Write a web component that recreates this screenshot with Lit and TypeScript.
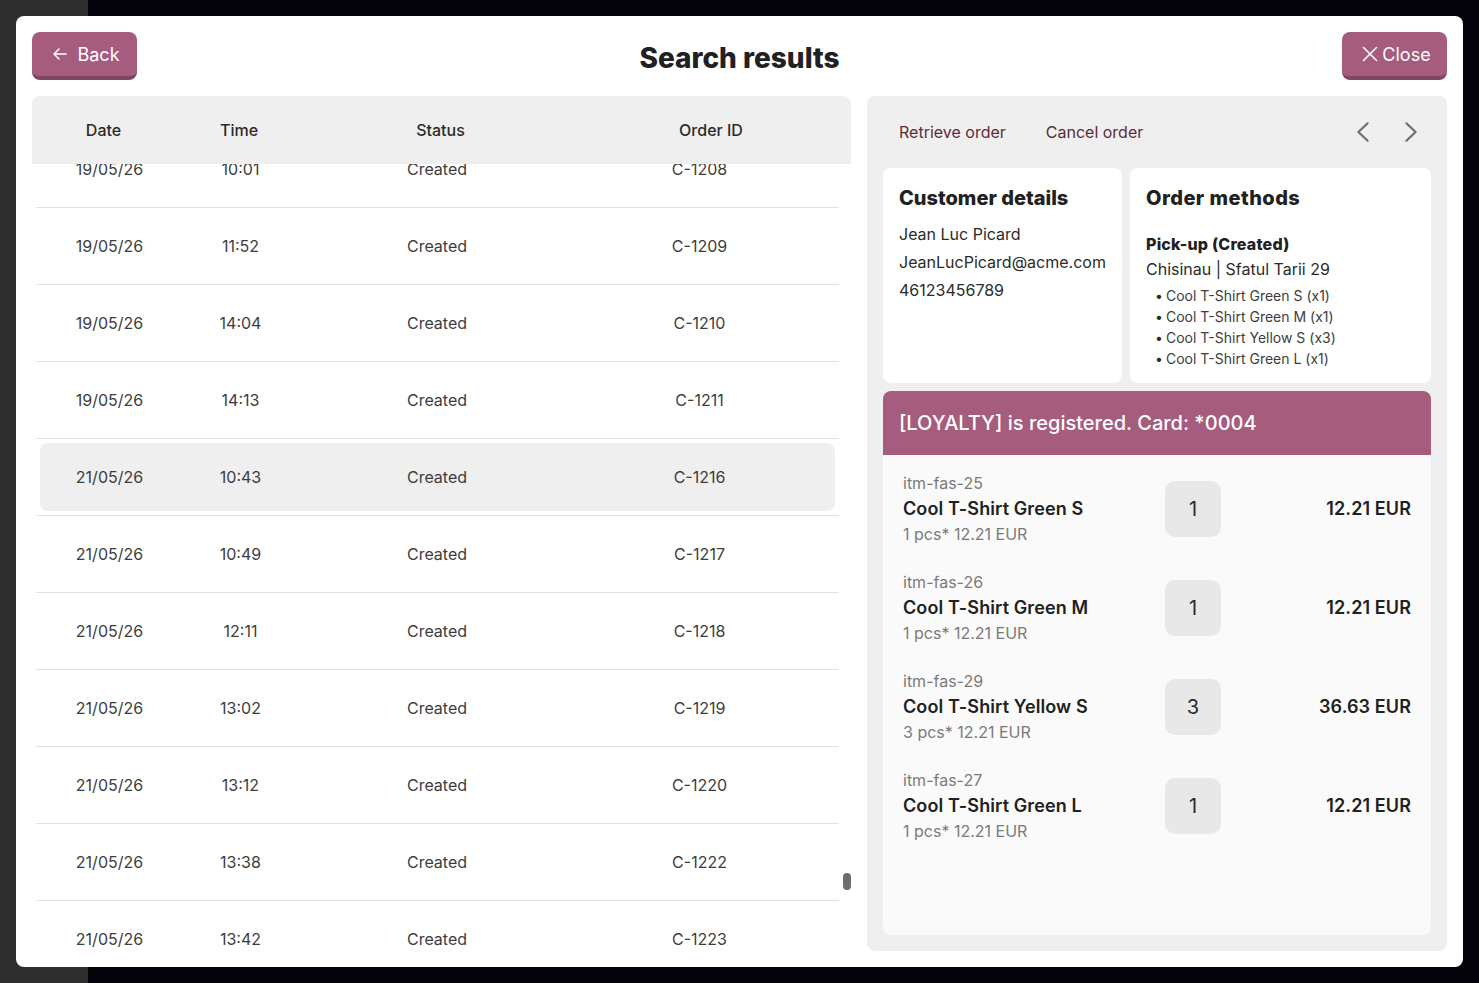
import { css, html, LitElement } from "lit";
import { customElement } from "lit/decorators.js";

const orders = [
  ["19/05/26", "10:01", "C-1208"],
  ["19/05/26", "11:52", "C-1209"],
  ["19/05/26", "14:04", "C-1210"],
  ["19/05/26", "14:13", "C-1211"],
  ["21/05/26", "10:43", "C-1216"],
  ["21/05/26", "10:49", "C-1217"],
  ["21/05/26", "12:11", "C-1218"],
  ["21/05/26", "13:02", "C-1219"],
  ["21/05/26", "13:12", "C-1220"],
  ["21/05/26", "13:38", "C-1222"],
  ["21/05/26", "13:42", "C-1223"],
];

const items = [
  { sku: "itm-fas-25", name: "Cool T-Shirt Green S", qty: 1, unit: "1 pcs* 12.21 EUR", total: "12.21 EUR" },
  { sku: "itm-fas-26", name: "Cool T-Shirt Green M", qty: 1, unit: "1 pcs* 12.21 EUR", total: "12.21 EUR" },
  { sku: "itm-fas-29", name: "Cool T-Shirt Yellow S", qty: 3, unit: "3 pcs* 12.21 EUR", total: "36.63 EUR" },
  { sku: "itm-fas-27", name: "Cool T-Shirt Green L", qty: 1, unit: "1 pcs* 12.21 EUR", total: "12.21 EUR" },
];

@customElement("app-root")
export class AppRoot extends LitElement {
  static override styles = css`
    :host {
      display: block;
      width: 1479px;
      height: 983px;
      overflow: hidden;
      font-family: "Inter", "Liberation Sans", sans-serif;
      color: #2b2b2b;
    }
    .backdrop {
      box-sizing: border-box;
      height: 983px;
      padding: 16px;
      background: linear-gradient(90deg, #2d2d2d 88px, #04030a 88px);
    }
    .modal {
      box-sizing: border-box;
      height: 951px;
      display: flex;
      flex-direction: column;
      gap: 16px;
      padding: 16px 16px 0;
      background: #fff;
      border-radius: 8px;
    }
    .head {
      display: flex;
      align-items: center;
      justify-content: space-between;
      height: 48px;
      flex: none;
    }
    .title {
      margin: 3px 0 0;
      font-family: "Inter", sans-serif;
      font-weight: 800;
      font-size: 28px;
      color: #212121;
    }
    .btn {
      box-sizing: border-box;
      width: 105px;
      height: 48px;
      display: flex;
      align-items: center;
      justify-content: center;
      background: #a55c7d;
      border: 0;
      border-bottom: 4px solid #7f4660;
      border-radius: 8px;
      color: #fff;
      font: 400 18px "Inter", sans-serif;
    }
    .btn svg {
      flex: none;
    }
    .back {
      gap: 10px;
      padding: 0 0 0 2px;
    }
    .close {
      gap: 4px;
      padding: 0 0 0 4px;
    }
    .main {
      flex: 1;
      min-height: 0;
      display: flex;
      gap: 16px;
    }
    .left {
      width: 819px;
      flex: none;
      position: relative;
      display: flex;
      flex-direction: column;
      min-height: 0;
    }
    .thead {
      flex: none;
      height: 68px;
      display: grid;
      grid-template-columns: 143px 128px 275px 266px;
      align-items: center;
      text-align: center;
      background: #efefef;
      border-radius: 8px 8px 0 0;
      font-size: 16px;
      font-weight: 450;
      color: #2b2b2b;
    }
    .scroll {
      flex: 1;
      min-height: 0;
      overflow: hidden;
      padding: 0 12px 0 4px;
    }
    .rows {
      margin-top: -33px;
    }
    .row {
      box-sizing: border-box;
      height: 77px;
      padding: 4px;
      border-bottom: 1px solid #e2e2e2;
    }
    .cells {
      height: 68px;
      display: grid;
      grid-template-columns: 139px 123px 270px 255px;
      align-items: center;
      text-align: center;
      font-size: 16px;
      color: #3d3d3d;
      border-radius: 8px;
    }
    .sel .cells {
      background: #efefef;
    }
    .thumb {
      position: absolute;
      right: 0;
      top: 777px;
      width: 8px;
      height: 17px;
      border-radius: 4px;
      background: #6e6e6e;
    }
    .right {
      box-sizing: border-box;
      width: 580px;
      flex: none;
      height: 855px;
      padding: 0 16px 16px;
      display: flex;
      flex-direction: column;
      background: #efefef;
      border-radius: 8px;
    }
    .actions {
      flex: none;
      height: 72px;
      display: flex;
      align-items: center;
      gap: 40px;
      padding: 0 0 0 16px;
      font-size: 16px;
      color: #5c2c38;
    }
    .nav {
      margin-left: auto;
      display: flex;
      gap: 24px;
      padding-right: 8px;
    }
    .nav svg {
      display: block;
    }
    .cards {
      flex: none;
      height: 215px;
      display: flex;
      gap: 8px;
    }
    .card {
      box-sizing: border-box;
      background: #fff;
      border-radius: 8px;
      padding: 16px;
    }
    .customer {
      width: 239px;
    }
    .methods {
      flex: 1;
    }
    .card h2 {
      margin: 0;
      height: 28px;
      line-height: 28px;
      font-family: "Inter", sans-serif;
      font-weight: 800;
      font-size: 20px;
      color: #212121;
    }
    .methods h2 {
      letter-spacing: 0.45px;
    }
    .lines {
      margin-top: 8px;
      font-size: 16px;
      line-height: 28px;
      color: #2b2b2b;
      white-space: nowrap;
    }
    .method-name {
      margin-top: 22px;
      font-family: "Inter", sans-serif;
      font-weight: 800;
      font-size: 16px;
      line-height: 20px;
      letter-spacing: 0.2px;
      color: #212121;
    }
    .place {
      margin-top: 3px;
      font-size: 16px;
      line-height: 24px;
    }
    .card ul {
      margin: 4px 0 0;
      padding: 0;
      list-style: none;
      font-size: 14px;
      line-height: 21px;
      color: #3d3d3d;
    }
    .card li {
      display: flex;
    }
    .card li::before {
      content: "•";
      width: 20px;
      padding-left: 9px;
      box-sizing: border-box;
      color: #2b2b2b;
    }
    .banner {
      flex: none;
      box-sizing: border-box;
      height: 64px;
      margin-top: 8px;
      padding: 0 16px;
      display: flex;
      align-items: center;
      background: #a55c7d;
      border-radius: 8px 8px 0 0;
      color: #fff;
      font-size: 20px;
      font-weight: 500;
    }
    .items {
      flex: 1;
      min-height: 0;
      padding: 16px 20px 0;
      display: flex;
      flex-direction: column;
      gap: 19px;
      background: #fafafa;
      border-radius: 0 0 8px 8px;
    }
    .item {
      height: 80px;
      display: grid;
      grid-template-columns: 262px 56px 1fr;
      align-items: start;
    }
    .sku,
    .unit {
      font-size: 16px;
      line-height: 24px;
      color: #7a7a7a;
    }
    .name {
      font-size: 18px;
      line-height: 27px;
      font-weight: 600;
      letter-spacing: 0.1px;
      color: #212121;
    }
    .qty {
      width: 56px;
      height: 56px;
      display: flex;
      align-items: center;
      justify-content: center;
      margin-top: 10px;
      background: #e8e8e8;
      border-radius: 10px;
      font-size: 20px;
      line-height: 24px;
      padding-bottom: 1px;
      box-sizing: border-box;
      color: #2b2b2b;
    }
    .total {
      margin-top: 10px;
      line-height: 56px;
      text-align: right;
      font-size: 18px;
      font-weight: 600;
      letter-spacing: 0.1px;
      color: #212121;
    }
  `;

  override render() {
    return html`
      <div class="backdrop">
        <div class="modal">
          <div class="head">
            <button class="btn back">
              <svg width="16" height="16" viewBox="0 0 16 16" fill="none" stroke="#fff" stroke-width="1.5" stroke-linecap="round" stroke-linejoin="round">
                <path d="M15 8H3M8 3L3 8l5 5" />
              </svg>
              Back
            </button>
            <h1 class="title">Search results</h1>
            <button class="btn close">
              <svg width="16" height="16" viewBox="0 0 16 16" fill="none" stroke="#fff" stroke-width="1.6" stroke-linecap="round">
                <path d="M1.500 1.500l13 13M14.500 1.500l-13 13" />
              </svg>
              Close
            </button>
          </div>
          <div class="main">
            <div class="left">
              <div class="thead">
                <div>Date</div>
                <div>Time</div>
                <div>Status</div>
                <div>Order ID</div>
              </div>
              <div class="scroll">
                <div class="rows">
                  ${orders.map(
                    (o) => html`
                      <div class="row ${o[2] === "C-1216" ? "sel" : ""}">
                        <div class="cells">
                          <div>${o[0]}</div>
                          <div>${o[1]}</div>
                          <div>Created</div>
                          <div>${o[2]}</div>
                        </div>
                      </div>
                    `
                  )}
                </div>
              </div>
              <div class="thumb"></div>
            </div>
            <div class="right">
              <div class="actions">
                <span>Retrieve order</span>
                <span>Cancel order</span>
                <div class="nav">
                  <svg width="24" height="24" viewBox="0 0 24 24" fill="none" stroke="#6e6e6e" stroke-width="2.2" stroke-linecap="round" stroke-linejoin="round">
                    <path d="M16.600 3.300L7.400 12l9.200 8.700" />
                  </svg>
                  <svg width="24" height="24" viewBox="0 0 24 24" fill="none" stroke="#6e6e6e" stroke-width="2.2" stroke-linecap="round" stroke-linejoin="round">
                    <path d="M7.400 3.300L16.600 12l-9.200 8.700" />
                  </svg>
                </div>
              </div>
              <div class="cards">
                <div class="card customer">
                  <h2>Customer details</h2>
                  <div class="lines">
                    <div>Jean Luc Picard</div>
                    <div>JeanLucPicard@acme.com</div>
                    <div>46123456789</div>
                  </div>
                </div>
                <div class="card methods">
                  <h2>Order methods</h2>
                  <div class="method-name">Pick-up (Created)</div>
                  <div class="place">Chisinau | Sfatul Tarii 29</div>
                  <ul>
                    ${items.map((i) => html`<li>${i.name} (x${i.qty})</li>`)}
                  </ul>
                </div>
              </div>
              <div class="banner">[LOYALTY] is registered. Card: *0004</div>
              <div class="items">
                ${items.map(
                  (i) => html`
                    <div class="item">
                      <div>
                        <div class="sku">${i.sku}</div>
                        <div class="name">${i.name}</div>
                        <div class="unit">${i.unit}</div>
                      </div>
                      <div class="qty">${i.qty}</div>
                      <div class="total">${i.total}</div>
                    </div>
                  `
                )}
              </div>
            </div>
          </div>
        </div>
      </div>
    `;
  }
}
